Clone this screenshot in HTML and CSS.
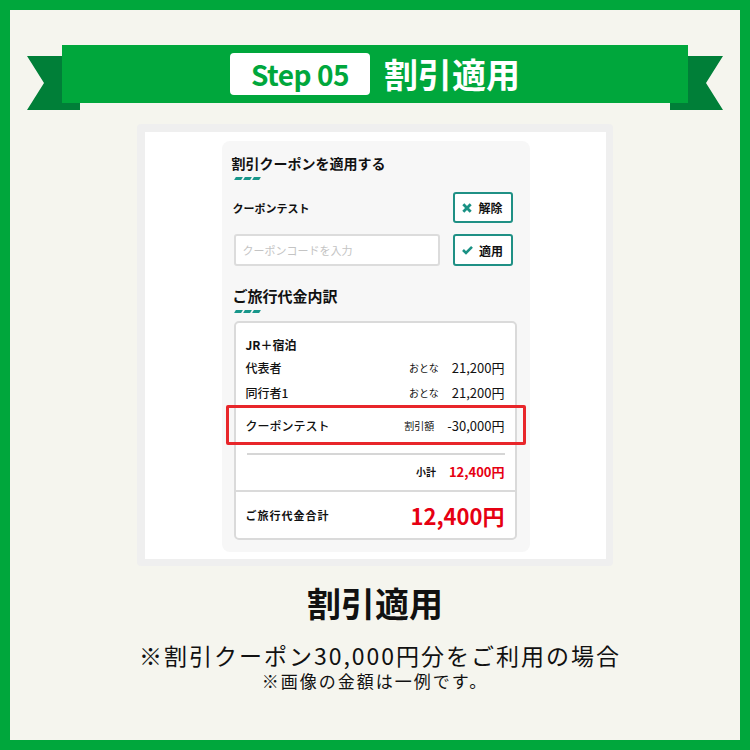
FILE: index.html
```html
<!DOCTYPE html>
<html lang="ja">
  <head>
    <meta charset="UTF-8" />
    <meta name="viewport" content="width=device-width, initial-scale=1.0" />
    <title>Step 05 割引適用</title>
    <link rel="stylesheet" href="styles.css">
  </head>
  <body>
    <div class="page">
      <div class="ribbon">
        <span class="step-badge">Step<span class="step-num">05</span></span>
        <span class="ribbon-title">割引適用</span>
      </div>

      <div class="shot">
        <div class="shot-inner">
          <div class="panel">
            <div class="sec-title">割引クーポンを適用する</div>
            <div class="dashes"><i></i><i></i><i></i></div>

            <div class="coupon-row">
              <span class="coupon-name">クーポンテスト</span>
              <button class="btn">
                <svg width="10" height="10" viewBox="0 0 10 10"><path d="M1.3 1.3l7.4 7.4M8.7 1.3l-7.4 7.4" stroke="#1a9184" stroke-width="2.8" fill="none" /></svg>
                解除
              </button>
            </div>
            <div class="coupon-form">
              <div class="coupon-input">クーポンコードを入力</div>
              <button class="btn">
                <svg width="11" height="10" viewBox="0 0 11 10"><path d="M1 5l3 3 6-6.2" stroke="#1a9184" stroke-width="2.6" fill="none" /></svg>
                適用
              </button>
            </div>

            <div class="sec-title sec-title-2">ご旅行代金内訳</div>
            <div class="dashes"><i></i><i></i><i></i></div>

            <div class="bill">
              <div class="bill-body">
                <div class="bill-head">JR＋宿泊</div>
                <div class="bill-row">
                  <span class="bill-label">代表者</span>
                  <span class="bill-kind">おとな</span>
                  <span class="bill-amount">21,200円</span>
                </div>
                <div class="bill-row">
                  <span class="bill-label">同行者1</span>
                  <span class="bill-kind">おとな</span>
                  <span class="bill-amount">21,200円</span>
                </div>
                <div class="bill-row bill-row-coupon">
                  <span class="bill-label">クーポンテスト</span>
                  <span class="bill-kind">割引額</span>
                  <span class="bill-amount">-30,000円</span>
                </div>
                <div class="bill-line"></div>
                <div class="bill-sub">
                  <span class="bill-sub-label">小計</span>
                  <span class="bill-sub-amount">12,400円</span>
                </div>
              </div>
              <div class="bill-total">
                <span class="bill-total-label">ご旅行代金合計</span>
                <span class="bill-total-amount">12,400円</span>
              </div>
            </div>
          </div>
        </div>
      </div>

      <div class="caption">割引適用</div>
      <div class="note">※割引クーポン30,000円分をご利用の場合</div>
      <div class="note-small">※画像の金額は一例です。</div>
    </div>
  </body>
</html>
```

FILE: styles.css
```css
body {
  margin: 0;
  font-family: "Noto Sans CJK JP", "Noto Sans", sans-serif;
  color: #111;
}
.page {
  width: 750px;
  height: 750px;
  box-sizing: border-box;
  border: 10px solid #00a73c;
  background: #f5f5ee;
  padding-top: 35px;
  position: relative;
  z-index: 0;
}

/* ribbon heading */
.ribbon {
  width: 626px;
  height: 58px;
  margin: 0 auto;
  background: #00a73c;
  position: relative;
  display: flex;
  align-items: center;
  justify-content: center;
  gap: 14px;
}
.ribbon::before,
.ribbon::after {
  content: "";
  position: absolute;
  top: 11px;
  width: 53px;
  height: 54px;
  background: #007f38;
  z-index: -1;
}
.ribbon::before {
  left: -35px;
  clip-path: polygon(0 0, 100% 0, 100% 100%, 0 100%, 17px 27px);
}
.ribbon::after {
  right: -35px;
  clip-path: polygon(0 0, 100% 0, calc(100% - 17px) 27px, 100% 100%, 0 100%);
}
.step-badge {
  width: 140px;
  height: 42px;
  background: #fff;
  border-radius: 4px;
  color: #00a73c;
  font-size: 28px;
  font-weight: 700;
  display: flex;
  align-items: center;
  justify-content: center;
  letter-spacing: -0.5px;
}
.step-num {
  margin-left: 6px;
}
.ribbon-title {
  color: #fff;
  font-size: 34px;
  font-weight: 700;
  line-height: 1;
}

/* screenshot */
.shot {
  width: 476px;
  box-sizing: border-box;
  margin: 21px auto 0;
  padding: 8px 7px 7px 8px;
  background: #efefef;
  border-radius: 4px;
}
.shot-inner {
  background: #fff;
  padding: 9px 0 7px;
  display: flex;
  justify-content: center;
}
.panel {
  width: 308px;
  box-sizing: border-box;
  background: #f7f7f7;
  border-radius: 8px;
  padding: 10px 13px 12px 12px;
}
.sec-title {
  font-size: 14px;
  font-weight: 700;
  line-height: 24px;
  height: 24px;
  margin-left: -2px;
}
.sec-title-2 {
  margin-top: 18px;
  font-size: 15px;
  margin-left: -1px;
}
.dashes {
  display: flex;
  gap: 2px;
  margin-top: 2px;
  height: 3px;
  margin-left: 1px;
}
.dashes i {
  width: 7px;
  height: 3px;
  background: #17968a;
  transform: skewX(-30deg);
}
.coupon-row,
.coupon-form {
  display: flex;
  justify-content: space-between;
  align-items: center;
  margin-right: 4px;
}
.coupon-row {
  margin-top: 12px;
}
.coupon-form {
  margin-top: 11px;
}
.coupon-name {
  font-size: 11px;
  font-weight: 700;
  margin-left: -1px;
}
.btn {
  width: 60px;
  height: 31px;
  box-sizing: border-box;
  border: 2px solid #1f9085;
  border-radius: 3px;
  background: #fff;
  font-family: inherit;
  font-size: 12px;
  font-weight: 700;
  color: #111;
  padding: 0;
  display: flex;
  align-items: center;
  justify-content: center;
  gap: 6px;
}
.coupon-form .btn {
  height: 32px;
}
.coupon-input {
  width: 206px;
  height: 32px;
  box-sizing: border-box;
  border: 2px solid #dcdcdc;
  border-radius: 3px;
  background: #fff;
  color: #c4c4c4;
  font-size: 11px;
  line-height: 28px;
  padding-left: 7px;
}

/* bill */
.bill {
  margin-top: 8px;
  background: #fff;
  border: 2px solid #dadada;
  border-radius: 5px;
}
.bill-body {
  padding: 12px 10px 7px;
}
.bill-head {
  font-size: 12px;
  font-weight: 700;
  line-height: 20px;
  height: 20px;
}
.bill-row {
  display: flex;
  align-items: center;
  height: 25px;
  position: relative;
}
.bill-row-coupon {
  height: 40px;
}
.bill-row-coupon::after {
  content: "";
  position: absolute;
  top: 0;
  bottom: 0;
  left: -20px;
  right: -21px;
  border: 3px solid #e8262a;
  border-radius: 2px;
}
.bill-label {
  font-size: 12px;
  font-weight: 500;
  flex: 1;
}
.bill-kind {
  font-size: 10px;
  margin-right: 13px;
}
.bill-amount {
  font-size: 13px;
}
.bill-line {
  height: 2px;
  background: #d6d6d6;
  margin: 8px 0 0 1px;
}
.bill-sub {
  display: flex;
  justify-content: flex-end;
  align-items: center;
  height: 24px;
  margin-top: 4px;
}
.bill-sub-label {
  font-size: 10px;
  font-weight: 700;
  margin-right: 13px;
}
.bill-sub-amount {
  font-size: 13px;
  font-weight: 700;
  color: #e60012;
}
.bill-total {
  border-top: 2px solid #dadada;
  height: 46px;
  display: flex;
  align-items: center;
  justify-content: space-between;
  padding: 0 10px;
}
.bill-total-label {
  font-size: 11px;
  font-weight: 700;
  letter-spacing: 1px;
}
.bill-total-amount {
  font-size: 22px;
  font-weight: 700;
  color: #e60012;
}

/* captions */
.caption {
  margin-top: 17px;
  text-align: center;
  font-size: 34px;
  font-weight: 700;
  line-height: 40px;
}
.note {
  margin-top: 17px;
  padding-left: 10px;
  text-align: center;
  font-size: 23px;
  line-height: 30px;
  letter-spacing: 2px;
}
.note-small {
  text-align: center;
  font-size: 17px;
  line-height: 22px;
  letter-spacing: 2px;
}
```
